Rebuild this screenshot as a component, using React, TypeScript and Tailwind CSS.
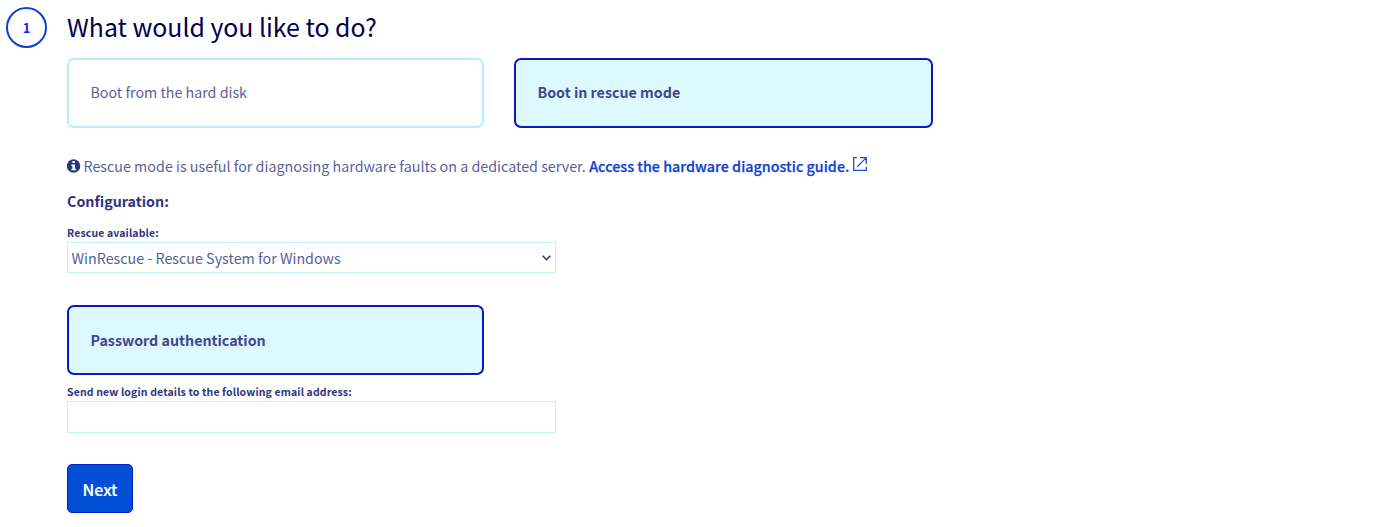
import React from "react";

type ChoiceProps = { label: string; selected?: boolean; wide?: boolean; raised?: boolean };

function Choice({ label, selected = false, wide = false, raised = false }: ChoiceProps) {
  return (
    <button
      type="button"
      className={
        "flex h-[70px] items-center rounded-[7px] border-2 px-[21.5px] text-left " +
        (raised ? "pb-[2px] " : "") +
        (wide ? "w-[419px] " : "w-[417px] ") +
        (selected
          ? "border-[#0c18c4] bg-[#def8ff] font-bold text-[#40468f]"
          : "border-[#b2f0ff] bg-white text-[#5b5f9e]")
      }
    >
      <span className="-mt-px whitespace-nowrap text-[14.25px] leading-5">{label}</span>
    </button>
  );
}

function InfoIcon() {
  return (
    <svg width="14" height="14" viewBox="0 0 14 14" className="shrink-0">
      <circle cx="6.6" cy="7" r="6.7" fill="#2d3480" />
      <path d="M5.4 2h2.5v2.1H5.4zM4.4 5.5h3.5v4.3H9v1.5H4.4V9.8h1V7h-1z" fill="#fff" />
    </svg>
  );
}

function ExternalIcon() {
  return (
    <svg width="14" height="14" viewBox="0 0 14 14" fill="none" stroke="#1f50d8" strokeWidth="1.3" className="shrink-0">
      <path d="M4 .7H.7v12.6h12.6V10M7 .7h6.3V7M13.1.9 4.5 9.5" />
    </svg>
  );
}

export default function App() {
  return (
    <main className="flex h-[527px] w-full overflow-hidden bg-white pl-[6px] font-['Noto_Sans_CJK_SC',sans-serif] text-[#4d5592]">
      <div className="mt-[7px] flex h-[41px] w-[41px] shrink-0 items-center justify-center rounded-full border-2 border-[#0a3fd6] text-[13px] font-bold text-[#1428e0]">
        1
      </div>
      <section className="ml-5 flex flex-col items-start">
        <h1 className="mt-[6px] h-[52px] whitespace-nowrap text-[24.85px] leading-10 text-[#00004f]">What would you like to do?</h1>
        <div className="flex gap-[30px]">
          <Choice label="Boot from the hard disk" raised />
          <Choice label="Boot in rescue mode" selected wide raised />
        </div>
        <p className="mt-7 flex h-5 items-center whitespace-nowrap text-[14.3px] leading-5">
          <InfoIcon />
          <span className="ml-[2.5px] text-[#5a5f9e]">Rescue mode is useful for diagnosing hardware faults on a dedicated server.</span>
          <a href="#guide" className="ml-[3.5px] flex items-center font-medium text-[#0f43d2]">
            <span className="tracking-[0.02px] [-webkit-text-stroke:0.25px_#0f43d2]">Access the hardware diagnostic guide.</span>
            <span className="mb-[5px] ml-1"><ExternalIcon /></span>
          </a>
        </p>
        <h2 className="mt-[15px] text-[14.3px] font-bold leading-5 text-[#2d3480]">Configuration:</h2>
        <label htmlFor="rescue" className="mt-[14px] text-[10.5px] font-bold leading-4 tracking-[0.13px] text-[#2d3480]">Rescue available:</label>
        <div className="mt-px grid w-[489px] items-center">
          <select
            id="rescue"
            className="col-start-1 row-start-1 h-[31px] w-full appearance-none border border-[#bff3fb] bg-white pl-[3.5px] text-[14.3px] leading-5 text-[#585d9c]"
          >
            <option>WinRescue - Rescue System for Windows</option>
          </select>
          <svg width="9" height="6" viewBox="0 0 9 6" fill="none" stroke="#252c79" strokeWidth="1.5" className="pointer-events-none col-start-1 row-start-1 mr-[5px] mt-px justify-self-end">
            <path d="M.7.8 4.5 4.7 8.3.8" />
          </svg>
        </div>
        <div className="mt-8"><Choice label="Password authentication" selected /></div>
        <label htmlFor="email" className="mt-[9px] text-[10.5px] font-bold leading-4 tracking-[0.13px] text-[#2d3480]">
          Send new login details to the following email address:
        </label>
        <input id="email" type="email" className="mt-px h-8 w-[489px] border border-[#bff3fb] bg-white px-2" />
        <button type="button" className="mt-[31px] h-[49px] w-[66px] rounded-[5px] border border-[#0020c8] bg-[#004fd6] text-[16px] font-medium leading-5 text-white [-webkit-text-stroke:0.2px_#fff]">
          Next
        </button>
      </section>
    </main>
  );
}
